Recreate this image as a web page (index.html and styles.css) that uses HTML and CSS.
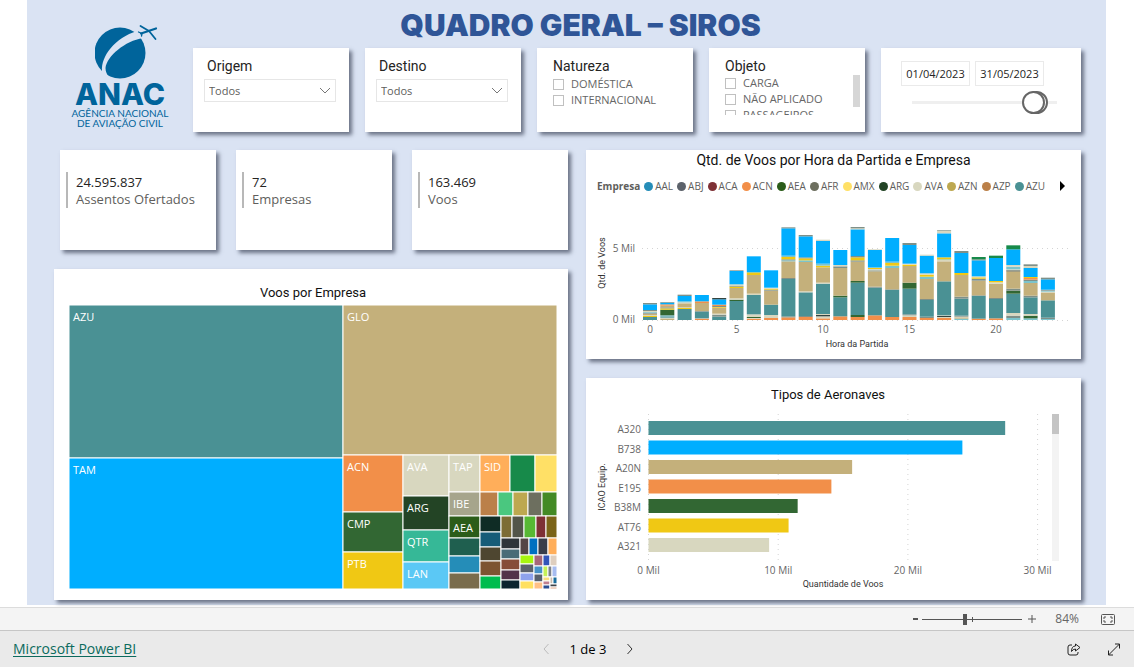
FILE: index.html
```html
<!DOCTYPE html>
<html lang="pt-BR">
<head>
<meta charset="utf-8">
<meta name="viewport" content="width=device-width, initial-scale=1">
<title>Quadro Geral – SIROS</title>
<link rel="stylesheet" href="styles.css">
</head>
<body>
<main class="report">
  <header class="head">
    <div class="logo">
      <svg class="logo-mark" viewBox="0 0 64 56" aria-hidden="true">
        <circle cx="25" cy="29" r="25.500" fill="#00649b"/>
        <path d="M4 47L7 47C6 32 20 14 42 7L50 6 48 14C30 17 12 32 10.500 44 10.500 48 12 50 14 54L4 56Z" fill="#dae3f3"/>
        <g fill="none" stroke="#00649b" stroke-linecap="round" stroke-linejoin="round">
          <path d="M46 9.500L61 4.500" stroke-width="2.200"/>
          <path d="M45.500 2L54 7M54 7L60.500 15" stroke-width="1.800"/>
          <path d="M43.500 8L47 9.500 46.500 12" stroke-width="1.300"/>
        </g>
      </svg>
      <div class="logo-name">ANAC</div>
      <div class="logo-sub">AGÊNCIA NACIONAL<br>DE AVIAÇÃO CIVIL</div>
    </div>
    <h1 class="title">QUADRO GERAL – SIROS</h1>
    <div class="filters">
      <section class="card filter">
        <label class="filter-name" for="origem">Origem</label>
        <div class="drop">
          <select id="origem"><option>Todos</option></select>
          <svg class="chev" viewBox="0 0 12 7" aria-hidden="true"><path d="M1 1l5 5 5-5"/></svg>
        </div>
      </section>
      <section class="card filter">
        <label class="filter-name" for="destino">Destino</label>
        <div class="drop">
          <select id="destino"><option>Todos</option></select>
          <svg class="chev" viewBox="0 0 12 7" aria-hidden="true"><path d="M1 1l5 5 5-5"/></svg>
        </div>
      </section>
      <section class="card filter checks">
        <h2 class="filter-name">Natureza</h2>
        <div class="check-list">
          <label class="check"><input type="checkbox">DOMÉSTICA</label>
          <label class="check"><input type="checkbox">INTERNACIONAL</label>
        </div>
      </section>
      <section class="card filter checks">
        <h2 class="filter-name">Objeto</h2>
        <div class="check-list clipped">
          <div>
            <label class="check"><input type="checkbox">CARGA</label>
            <label class="check"><input type="checkbox">NÃO APLICADO</label>
            <label class="check"><input type="checkbox">PASSAGEIROS</label>
          </div>
          <span class="scroll-thumb"></span>
        </div>
      </section>
      <section class="card filter dates">
        <div class="date-row">
          <input class="date" type="text" value="01/04/2023" aria-label="Data inicial">
          <input class="date" type="text" value="31/05/2023" aria-label="Data final">
        </div>
        <div class="range">
          <input type="range" min="0" max="100" value="93" aria-label="Fim do período">
          <input type="range" min="0" max="100" value="90" aria-label="Início do período">
        </div>
      </section>
    </div>
  </header>

  <div class="body">
    <div class="col">
      <div class="kpis">
        <section class="card kpi"><div class="kpi-in"><strong>24.595.837</strong><span>Assentos Ofertados</span></div></section>
        <section class="card kpi"><div class="kpi-in"><strong>72</strong><span>Empresas</span></div></section>
        <section class="card kpi"><div class="kpi-in"><strong>163.469</strong><span>Voos</span></div></section>
      </div>
      <section class="card tree">
        <h2 class="chart-title">Voos por Empresa</h2>
        <svg id="treemap" class="chart" viewBox="0 0 488 284" role="img" aria-label="Voos por Empresa"></svg>
      </section>
    </div>
    <div class="col">
      <section class="card hours">
        <h2 class="chart-title">Qtd. de Voos por Hora da Partida e Empresa</h2>
        <div class="legend">
          <b>Empresa</b>
          <ul id="legend"></ul>
          <button class="legend-next" type="button" aria-label="Próximas empresas"><svg viewBox="0 0 5 10"><path d="M0 0l5 5-5 5z"/></svg></button>
        </div>
        <svg id="hours" class="chart" viewBox="0 0 495 150" role="img" aria-label="Quantidade de voos por hora"></svg>
      </section>
      <section class="card types">
        <h2 class="chart-title">Tipos de Aeronaves</h2>
        <svg id="types" class="chart" viewBox="0 0 495 190" role="img" aria-label="Tipos de Aeronaves"></svg>
      </section>
    </div>
  </div>
</main>

<div class="zoombar">
  <button class="step" type="button" aria-label="Reduzir"><svg viewBox="0 0 8 8"><path d="M2 4h5" stroke-width="2"/></svg></button>
  <div class="zoom-range"><input type="range" min="0" max="100" value="42" aria-label="Zoom"></div>
  <button class="step" type="button" aria-label="Ampliar"><svg viewBox="0 0 8 8"><path d="M0 4h8M4 0v8"/></svg></button>
  <span class="pct">84%</span>
  <button class="fit" type="button" aria-label="Ajustar à página"><svg viewBox="0 0 14 11"><rect x=".5" y=".5" width="13" height="10" rx="1"/><path d="M3 5V3h2M9 3h2v2M11 6v2H9M5 8H3V6"/></svg></button>
</div>

<footer class="foot">
  <a class="brand" href="#">Microsoft Power BI</a>
  <nav class="pager" aria-label="Páginas">
    <button type="button" disabled aria-label="Anterior"><svg viewBox="0 0 6 10"><path d="M5.500 0L1 5l4.500 5"/></svg></button>
    <span>1 de 3</span>
    <button type="button" aria-label="Próxima"><svg viewBox="0 0 6 10"><path d="M.5 0L5 5 .5 10"/></svg></button>
  </nav>
  <div class="tools">
    <button type="button" aria-label="Compartilhar"><svg viewBox="0 0 14 13"><path d="M5 2H3Q1 2 1 4v6q0 2 2 2h6q2 0 2-2V9"/><path d="M8.500 1L13 4.500 8.500 8V6Q6 6 4.500 8.500 4.500 3 8.500 3z"/></svg></button>
    <button type="button" aria-label="Tela cheia"><svg viewBox="0 0 14 13"><path d="M1.500 12L12.500 1M8 1h4.500v4.500M1.500 7.500V12H6"/></svg></button>
  </div>
</footer>
<script src="charts.js"></script>
</body>
</html>
```
FILE: styles.css
```css
* { box-sizing: border-box; }

body {
  margin: 0;
  min-height: 100vh;
  display: flex;
  flex-direction: column;
  background: #fff;
  color: #252423;
  font-family: "Open Sans", "Noto Sans", sans-serif;
}

h1, h2 { margin: 0; font-weight: 400; }
button { padding: 0; border: 0; background: none; display: block; }
button svg { display: block; }
input, select { font-family: inherit; margin: 0; }

.report {
  margin: 0 28px 2px 27px;
  padding: 0 25px 5px 27px;
  background: #dae3f3;
}

.card {
  background: #fff;
  box-shadow: 3px 3px 4px rgba(70, 78, 98, .75);
}

/* Header */
.head {
  display: grid;
  grid-template-columns: 139px 1fr;
  grid-template-rows: 48px auto;
}
.logo {
  grid-row: 1 / 3;
  display: flex;
  flex-direction: column;
  align-items: center;
  width: 132px;
  padding-top: 24px;
  color: #00649b;
}
.logo-mark { width: 64px; height: 56px; margin-left: 14px; }
.logo-name {
  font: 800 30px/28px Inter, sans-serif;
}
.logo-sub {
  font: 400 10px/10px Lato, sans-serif;
  text-align: center;
}
.title {
  padding: 8px 113px 0 0;
  text-align: center;
  font: 900 30px/34px Inter, sans-serif;
  color: #2f5597;
  white-space: nowrap;
}

.filters {
  display: grid;
  grid-template-columns: 156fr 156fr 156fr 156fr 200fr;
  gap: 16px;
}
.filter { min-width: 0; height: 84px; padding: 10px 13px 0 11px; }
.filter-name {
  display: block;
  padding-left: 3px;
  font: 400 14px/16px Roboto, sans-serif;
  color: #252423;
}
.drop { position: relative; margin-top: 5px; }
.drop select {
  appearance: none;
  display: block;
  width: 100%;
  height: 23px;
  padding: 0 4px;
  border: 1px solid #e6e6e6;
  border-radius: 0;
  background: #fff;
  color: #605e5c;
  font-size: 11px;
}
.chev {
  position: absolute;
  right: 5px;
  top: 8px;
  width: 12px;
  height: 7px;
  fill: none;
  stroke: #777;
  pointer-events: none;
}
.checks { padding: 10px 5px 0 16px; }
.checks .filter-name { padding: 0; }
.check { display: flex; align-items: center; gap: 7px; height: 16px; font-size: 11px; line-height: 16px; color: #666; white-space: nowrap; }
.check input { appearance: none; width: 11px; height: 11px; border: 1px solid #c0c0c0; background: #fff; }
.check-list { margin-top: 2px; }
.clipped { display: flex; justify-content: space-between; height: 40px; overflow: hidden; margin-top: 1px; }
.scroll-thumb { width: 7px; height: 32px; background: #d6d6d6; }

.dates { padding: 13px 20px 0 20px; }
.date-row { display: flex; gap: 5px; }
.date {
  width: 69px;
  height: 25px;
  padding: 0;
  border: 1px solid #eaeaea;
  text-align: center;
  color: #252423;
  font-size: 11px;
}
.range { position: relative; height: 24px; margin: 5px 4px 0 11px; }
.range::before { content: ""; position: absolute; left: 0; right: 0; top: 10px; height: 3px; background: #efefef; }
.range input {
  appearance: none;
  position: absolute;
  left: 0;
  top: 0;
  width: 100%;
  height: 23px;
  background: none;
}
.range input::-webkit-slider-thumb {
  appearance: none;
  width: 23px;
  height: 23px;
  border: 2px solid #666;
  border-radius: 50%;
  background: #fff;
}

/* Body */
.body {
  display: grid;
  grid-template-columns: 514fr 495fr;
  gap: 18px;
  padding-top: 18px;
}
.col { display: flex; flex-direction: column; gap: 19px; min-width: 0; }
.kpis { display: grid; grid-template-columns: repeat(3, 1fr); gap: 20px; padding-left: 6px; }
.kpi { height: 100px; padding: 22px 6px 0; }
.kpi-in {
  display: flex;
  flex-direction: column;
  height: 36px;
  padding-left: 8px;
  border-left: 2px solid #b8b8b8;
  font-size: 13px;
  line-height: 17px;
  padding-top: 2px;
  white-space: nowrap;
}
.kpi-in strong { font-weight: 400; }
.kpi-in span { color: #605e5c; }

.chart-title {
  text-align: center;
  font: 400 13px/16px Roboto, sans-serif;
  color: #111;
}
.chart { display: block; width: 100%; height: auto; }
.tree { padding: 16px 11px 11px 15px; }
.tree .chart-title { margin-bottom: 4px; }
.hours { padding-top: 2px; padding-bottom: 6px; }
.hours .chart-title { font-size: 14px; }
.hours .chart { margin-top: 9px; }
.types { padding-top: 9px; padding-bottom: 7px; }
.types .chart-title { padding-right: 11px; }

.legend {
  display: flex;
  align-items: center;
  margin-top: 10px;
  padding: 0 16px 0 11px;
  height: 16px;
  font-size: 10px;
  line-height: 16px;
  color: #605e5c;
}
.legend b { margin-right: 4px; }
.legend ul { display: flex; gap: 4px; margin: 0; padding: 0; list-style: none; }
.legend li { display: flex; align-items: center; gap: 2px; }
.legend i { width: 9px; height: 9px; border-radius: 50%; }
.legend-next { margin-left: auto; }
.legend-next svg { width: 5px; height: 10px; }

.tile { stroke: #fff; }
.tile-label { font-size: 11px; fill: #fff; }
.tick { font-size: 10px; fill: #666; }
.axis-name { font: 400 9px Roboto, sans-serif; fill: #333; }
.grid-line { stroke: #d4d4d4; stroke-dasharray: 1 4; }
.mid { text-anchor: middle; }
.end { text-anchor: end; }

/* Bottom bars */
.zoombar {
  display: flex;
  align-items: center;
  justify-content: flex-end;
  height: 23px;
  padding-right: 19px;
  border-top: 1px solid #dcdcdc;
  background: #f4f4f4;
}
.step svg { width: 8px; height: 8px; fill: none; stroke: #555; }
.zoom-range { position: relative; width: 100px; height: 11px; margin: 0 6px 0 3px; }
.zoom-range::before { content: ""; position: absolute; left: 0; right: 0; top: 5px; height: 1px; background: #555; }
.zoom-range::after { content: ""; position: absolute; left: 50%; top: 3px; width: 1px; height: 5px; background: #555; }
.zoom-range input { appearance: none; display: block; position: relative; width: 100%; height: 11px; background: none; }
.zoom-range input::-webkit-slider-thumb { appearance: none; width: 4px; height: 11px; background: #555; }
.pct { margin: 0 22px 0 19px; font-size: 12px; line-height: 16px; color: #666; }
.fit svg { width: 14px; height: 11px; fill: none; stroke: #555; }

.foot {
  flex: 1;
  display: grid;
  grid-template-columns: 1fr auto 1fr;
  align-items: center;
  min-height: 36px;
  padding: 0 13px;
  border-top: 1px solid #c6c6c6;
  background: #eaeaea;
}
.brand { justify-self: start; color: #0b6a5d; font-size: 14px; line-height: 18px; text-underline-offset: 2px; }
.pager { display: flex; align-items: center; gap: 21px; margin-left: 42px; font-size: 13px; line-height: 18px; color: #000; }
.pager svg { width: 6px; height: 10px; fill: none; stroke: #333; }
.pager button:disabled svg { stroke: #bbb; }
.tools { display: flex; justify-content: flex-end; gap: 26px; }
.tools svg { width: 14px; height: 13px; fill: none; stroke: #222; }
```
FILE: charts.js
```js
const NS = "http://www.w3.org/2000/svg";

function add(parent, name, attrs, text) {
  const el = document.createElementNS(NS, name);
  for (const key in attrs) el.setAttribute(key, attrs[key]);
  if (text) el.textContent = text;
  parent.appendChild(el);
  return el;
}

/* Treemap: x, y, width, height, colour, label */
const tiles = [
  [0, 0, 274, 153, "#4a9194", "AZU"], [0, 153, 274, 131, "#00aeff", "TAM"],
  [274, 0, 214, 150, "#c4b07b", "GLO"],
  [274, 150, 60, 57, "#f28f49", "ACN"], [274, 207, 60, 40, "#326733", "CMP"], [274, 247, 60, 37, "#f0c814", "PTB"],
  [334, 150, 46, 41, "#d8d7bf", "AVA"], [334, 191, 46, 34, "#234425", "ARG"], [334, 225, 46, 32, "#36b897", "QTR"], [334, 257, 46, 27, "#5bc8f5", "LAN"],
  [380, 150, 31, 37, "#d8d7bf", "TAP"], [411, 150, 30, 37, "#ffae5a", "SID"], [441, 150, 25, 37, "#178a4a"], [466, 150, 22, 37, "#ffe066"],
  [380, 187, 31, 24, "#a6a58c", "IBE"], [380, 211, 31, 22, "#2b5c19", "AEA"], [380, 233, 31, 18, "#1f5f4f"], [380, 251, 31, 17, "#258db8"], [380, 268, 31, 16, "#7a6c4c"],
  [411, 187, 18, 24, "#bb8049"], [429, 187, 15, 24, "#4ac77f"], [444, 187, 15, 24, "#bda850"], [459, 187, 14, 24, "#6d6f5f"], [473, 187, 15, 24, "#438a25"],
  [411, 211, 21, 16, "#0f2c25"], [411, 227, 21, 15, "#165c78"], [411, 242, 21, 14, "#4e4630"], [411, 256, 21, 15, "#7d5431"], [411, 271, 21, 13, "#00bc4e"],
  [432, 211, 11, 22, "#7c6c35"], [443, 211, 12, 22, "#53554a"], [455, 211, 12, 22, "#57b834"], [467, 211, 10, 22, "#7e3035"], [477, 211, 11, 22, "#7b6418"],
  [432, 233, 19, 11, "#2f353a"], [432, 244, 19, 10, "#4a6b77"], [432, 254, 19, 11, "#864d38"], [432, 265, 19, 10, "#53324a"], [432, 275, 19, 9, "#0b242f"],
  [451, 233, 9, 17, "#544645"], [460, 233, 9, 17, "#0070c0"], [469, 233, 10, 17, "#383d4a"], [479, 233, 9, 17, "#ffae5a"],
  [451, 250, 14, 9, "#a8f60f"], [451, 259, 14, 9, "#5c626b"], [451, 268, 14, 8, "#8ea2ec"], [451, 276, 14, 8, "#ffe060"],
  [465, 250, 9, 11, "#a66779"], [465, 261, 9, 8, "#4793c8"], [465, 269, 9, 8, "#58606b"], [465, 277, 9, 7, "#ffc085"],
  [474, 250, 7, 11, "#3255b9"], [481, 250, 7, 11, "#dfcfbf"],
  [474, 261, 5, 11, "#c5f158"], [479, 261, 4, 11, "#7b8088"], [483, 261, 5, 11, "#a7bcf0"],
  [474, 272, 7, 4, "#f8de7c"], [474, 276, 7, 4, "#c08090"], [474, 280, 7, 4, "#2a4e93"],
  [481, 272, 3, 7, "#ccbdae"], [484, 272, 4, 7, "#1b6d9b"], [481, 279, 7, 3, "#40454a"], [481, 282, 7, 2, "#e0a888"]
];
const tree = document.getElementById("treemap");
for (const [x, y, w, h, fill, label] of tiles) {
  add(tree, "rect", { x, y, width: w, height: h, fill, class: "tile" });
  if (label) add(tree, "text", { x: x + 4, y: y + 16, class: "tile-label" }, label);
}

/* Legend */
const airlines = [
  ["AAL", "#258db8"], ["ABJ", "#5c626b"], ["ACA", "#7e3035"], ["ACN", "#f28f49"],
  ["AEA", "#2b5c19"], ["AFR", "#6d6f5f"], ["AMX", "#ffe066"], ["ARG", "#234425"],
  ["AVA", "#d8d7bf"], ["AZN", "#bda850"], ["AZP", "#bb8049"], ["AZU", "#4a9194"]
];
const legend = document.getElementById("legend");
for (const [name, color] of airlines) {
  const li = document.createElement("li");
  const dot = document.createElement("i");
  dot.style.background = color;
  li.append(dot, name);
  legend.appendChild(li);
}

/* Flights per hour: stacks from the base up, 215 units = 5 Mil */
const palette = {
  T: "#4a9194", G: "#c4b07b", B: "#00aeff", O: "#f28f49", Y: "#f0c814", D: "#326733",
  L: "#d8d7bf", C: "#7cc4cc", g: "#7f9088", K: "#334440", S: "#178a4a"
};
const stacks = [
  "T9 Y3 L3 G4 g3 C2 L3 g3 B17 g4",
  "G3 L4 T4 C3 D17 Y4 g3 G5 O4 B5 g2",
  "T33 Y3 L2 G12 L3 C3 B16 g4",
  "O4 L1 T20 g2 G24 O5 B19",
  "T10 g6 L3 G18 Y2 g3 O4 B16 K4",
  "T57 D4 L4 G31 Y4 g2 L5 B40 g2",
  "O4 L2 D3 L8 T58 L4 G56 Y8 B48",
  "O6 L9 T31 G42 g3 Y3 L3 B52",
  "O8 g3 T112 g3 G50 C3 g3 Y7 C4 B82 g3",
  "O9 g3 T71 L3 G88 C5 Y6 g3 B63 g4",
  "O5 L6 K4 L3 T91 L3 G46 Y5 C6 B68 L4",
  "O11 T57 D5 G83 g5 L4 B45",
  "O9 D6 T97 D5 G58 g4 Y9 g4 B80 L3 g4",
  "O14 T83 g3 G46 g3 L4 Y3 C2 B52 L2",
  "O9 T81 g2 G64 C7 Y8 C4 B71",
  "O9 L5 g3 T77 D18 G50 Y4 L3 B56 g6",
  "O6 g4 T50 g3 G60 C7 Y6 L4 B53 L3",
  "O6 L3 K3 L2 T102 G60 L4 C2 Y6 B72 L8 g2",
  "C4 G4 L2 g3 T51 g6 G65 Y6 B60 g6",
  "O4 T68 g2 G44 g6 Y4 L3 B48 g3 S7",
  "O5 T58 g3 G43 L4 Y4 B69 S7",
  "C6 g7 L8 T58 D9 g6 G52 K3 L3 C8 L5 B47 S12",
  "C5 D8 L5 T50 g5 G38 C6 g4 O5 Y3 B27 L6 g5",
  "C3 g4 T52 G22 L4 C3 g3 B31 g5"
];
const hours = document.getElementById("hours");
const base = 117;
add(hours, "path", { d: `M56 ${base - 71.5}H484M56 ${base + .5}H484`, class: "grid-line" });
add(hours, "text", { x: 49, y: 49, class: "tick end" }, "5 Mil");
add(hours, "text", { x: 49, y: 120, class: "tick end" }, "0 Mil");
stacks.forEach((stack, i) => {
  const x = 57 + i * 17.3;
  let y = base;
  for (const part of stack.split(" ")) {
    const h = part.slice(1) / 3;
    y -= h;
    add(hours, "rect", { x, y, width: 14, height: h, fill: palette[part[0]] });
  }
  if (i % 5 === 0) add(hours, "text", { x: x + 7, y: 130, class: "tick mid" }, String(i));
});
add(hours, "text", { x: 271, y: 144, class: "axis-name mid" }, "Hora da Partida");
add(hours, "text", { x: 0, y: 0, transform: "translate(19 60) rotate(-90)", class: "axis-name mid" }, "Qtd. de Voos");

/* Aircraft types, in Mil */
const aircraft = [
  ["A320", 27.5, "#4a9194"], ["B738", 24.2, "#00aeff"], ["A20N", 15.7, "#c4b07b"], ["E195", 14.1, "#f28f49"],
  ["B38M", 11.5, "#326733"], ["AT76", 10.8, "#f0c814"], ["A321", 9.3, "#d8d7bf"]
];
const types = document.getElementById("types");
for (let v = 0; v <= 30; v += 10) {
  const x = 62.5 + v * 12.97;
  add(types, "path", { d: `M${x} 11V159`, class: "grid-line" });
  add(types, "text", { x, y: 171, class: "tick mid" }, v + " Mil");
}
aircraft.forEach(([name, value, fill], i) => {
  const y = 18 + i * 19.5;
  add(types, "rect", { x: 62.5, y, width: value * 12.97, height: 14, fill });
  add(types, "text", { x: 55, y: y + 12, class: "tick end" }, name);
});
add(types, "rect", { x: 466, y: 11, width: 7, height: 147, fill: "#f3f3f3" });
add(types, "rect", { x: 466, y: 11, width: 7, height: 20, fill: "#c4c4c4" });
add(types, "text", { x: 257, y: 184, class: "axis-name mid" }, "Quantidade de Voos");
add(types, "text", { x: 0, y: 0, transform: "translate(19 84) rotate(-90)", class: "axis-name mid" }, "ICAO Equip.");
```
